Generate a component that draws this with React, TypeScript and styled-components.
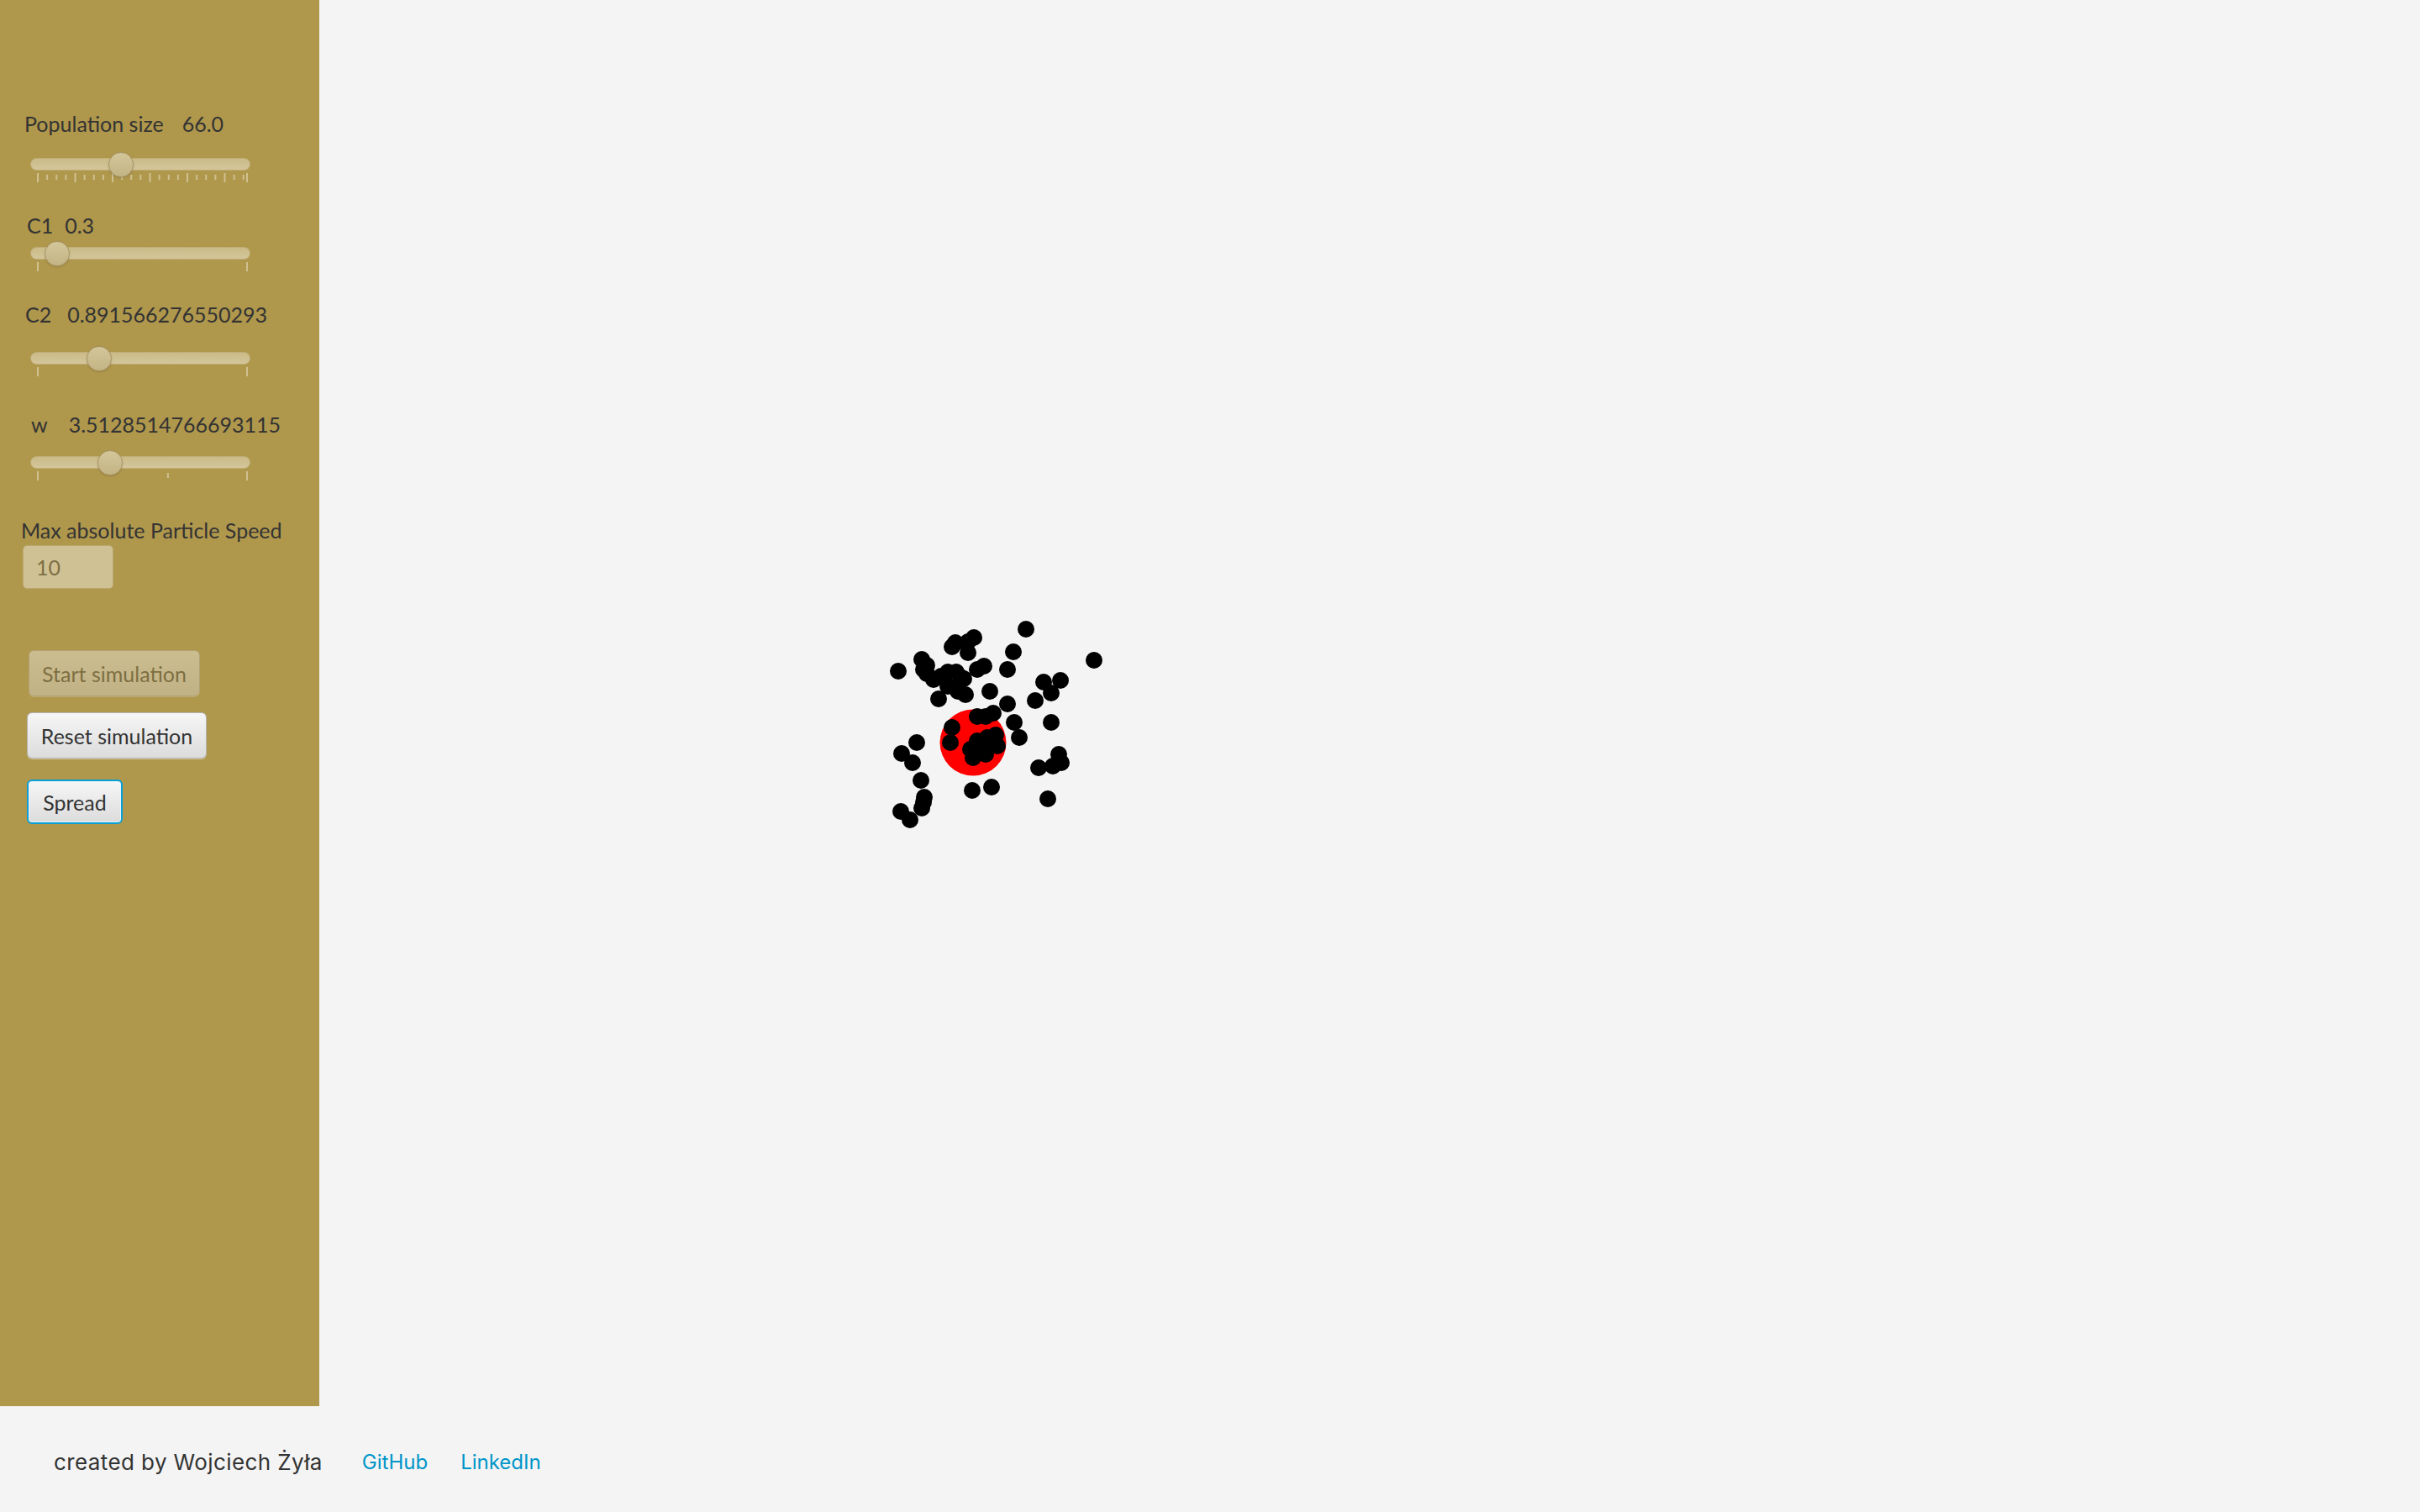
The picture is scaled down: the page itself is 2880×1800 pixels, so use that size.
import React from "react";
import styled, { createGlobalStyle } from "styled-components";

const GOLD = "#af974c";
const PAGE_BG = "#f4f4f4";
const TEXT = "#333333";
const LINK = "#0096c9";

const Global = createGlobalStyle`
  html, body { margin: 0; padding: 0; background: ${PAGE_BG}; }
  body { font-family: Lato, "Open Sans", sans-serif; color: ${TEXT}; }
  * { box-sizing: border-box; }
`;

const Page = styled.div`
  width: 2880px;
  height: 1800px;
  display: flex;
  flex-direction: column;
  background: ${PAGE_BG};
  overflow: hidden;
`;

const Main = styled.div`
  display: flex;
  height: 1674px;
  flex: none;
`;

const Sidebar = styled.aside`
  width: 380px;
  flex: none;
  background: ${GOLD};
  display: flex;
  flex-direction: column;
  align-items: flex-start;
  padding-top: 132px;
`;

const Canvas = styled.div`
  flex: 1;
  position: relative;
  background: ${PAGE_BG};
`;

const Field = styled.svg`
  display: block;
  width: 100%;
  height: 100%;
`;

const LabelRow = styled.div<{ $left: number; $top: number }>`
  display: flex;
  height: 30px;
  line-height: 30px;
  font-family: Lato, sans-serif;
  font-size: 25px;
  color: ${TEXT};
  white-space: nowrap;
  margin-top: ${(p) => p.$top}px;
  padding-left: ${(p) => p.$left}px;
`;

const Value = styled.span<{ $gap: number }>`
  margin-left: ${(p) => p.$gap}px;
`;

const SliderBox = styled.div<{ $top: number }>`
  margin-top: ${(p) => p.$top}px;
  margin-left: 36px;
  width: 262px;
  display: flex;
  flex-direction: column;
  gap: 3px;
`;

const Track = styled.div`
  position: relative;
  height: 15px;
  border: 1px solid #c1ae78;
  border-radius: 8px;
  background: linear-gradient(#cbbb88, #d4c69b);
`;

const Thumb = styled.div`
  position: absolute;
  top: -8px;
  width: 30px;
  height: 30px;
  margin-left: -16px;
  border-radius: 50%;
  border: 1px solid #a89569;
  background: linear-gradient(#d3c699, #c4b485);
  box-shadow: 0 1px 2px rgba(80, 65, 20, 0.25);
`;

const Ticks = styled.svg`
  display: block;
  width: 262px;
  height: 11px;
`;

const SpeedInput = styled.input`
  margin: 3px 0 0 27px;
  width: 108px;
  height: 52px;
  border: 1.5px solid #bba870;
  border-radius: 5px;
  background: #cfc193;
  padding: 0 0 0 15px;
  font-family: Lato, sans-serif;
  font-size: 25px;
  color: #7d6f45;
  outline: none;
`;

type Variant = "disabled" | "normal" | "focused";

const Button = styled.button<{ $variant: Variant; $top: number; $left: number; $width: number; $height: number }>`
  margin-top: ${(p) => p.$top}px;
  margin-left: ${(p) => p.$left}px;
  width: ${(p) => p.$width}px;
  height: ${(p) => p.$height}px;
  padding: 0;
  font-family: Lato, sans-serif;
  font-size: 25px;
  color: ${TEXT};
  border-radius: 6px;
  background: linear-gradient(#f6f6f6, #dcdcdc);
  border: ${(p) => (p.$variant === "focused" ? "2px solid #0aa0d6" : "1px solid #b3b3b3")};
  box-shadow: ${(p) =>
    p.$variant === "focused"
      ? "inset 0 0 0 1px #e6f3f8"
      : "0 1px 0 rgba(255, 255, 255, 0.45)"};
  opacity: ${(p) => (p.$variant === "disabled" ? 0.4 : 1)};
  cursor: default;
`;

const Footer = styled.footer`
  height: 126px;
  flex: none;
  display: flex;
  align-items: center;
  padding: 6px 0 0 64px;
  font-family: Inter, sans-serif;
  background: ${PAGE_BG};
`;

const Credit = styled.span`
  font-size: 26px;
  letter-spacing: 0.4px;
  color: ${TEXT};
`;

const FooterLink = styled.a<{ $gap: number }>`
  margin-left: ${(p) => p.$gap}px;
  font-size: 24px;
  color: ${LINK};
  text-decoration: none;
`;

type Tick = { f: number; major: boolean };

const TRACK_START = 9;
const TRACK_SPAN = 249;

function Slider({ top, value, ticks }: { top: number; value: number; ticks: Tick[] }) {
  return (
    <SliderBox $top={top}>
      <Track>
        <Thumb style={{ left: TRACK_START + value * TRACK_SPAN }} />
      </Track>
      <Ticks viewBox="0 0 262 11">
        {ticks.map((t, i) => {
          const x = TRACK_START + t.f * TRACK_SPAN;
          return (
            <line
              key={i}
              x1={x}
              x2={x}
              y1={t.major ? 0 : 2}
              y2={t.major ? 11 : 8}
              stroke="#d0c190"
              strokeWidth={2}
            />
          );
        })}
      </Ticks>
    </SliderBox>
  );
}

const ends: Tick[] = [
  { f: 0, major: true },
  { f: 1, major: true },
];

const popTicks: Tick[] = (() => {
  const unit = 44.5 / 249;
  const list: Tick[] = [];
  for (let k = 0; k < 6; k++) {
    for (let j = 0; j < 4; j++) {
      const f = (k + j / 4) * unit;
      if (f < 0.99) list.push({ f, major: j === 0 });
    }
  }
  list.push({ f: 1, major: true });
  return list;
})();

const wTicks: Tick[] = [...ends, { f: 0.622, major: false }];

const particles: [number, number][] = [
  [1069, 799], [1097, 785], [1103, 792], [1103, 802], [1111, 809], [1128, 800],
  [1138, 800], [1147, 808], [1128, 817], [1140, 823], [1149, 827], [1117, 832],
  [1137, 765], [1133, 770], [1159, 759], [1152, 764], [1152, 777], [1163, 797],
  [1171, 793], [1178, 823], [1163, 853], [1173, 853], [1182, 849], [1221, 749],
  [1206, 776], [1199, 797], [1302, 786], [1242, 812], [1262, 810], [1251, 825],
  [1232, 834], [1199, 838], [1207, 860], [1213, 878], [1251, 860], [1260, 898],
  [1263, 908], [1253, 912], [1236, 914], [1247, 951], [1133, 866], [1131, 884],
  [1091, 884], [1073, 897], [1086, 908], [1096, 929], [1100, 949], [1097, 962],
  [1072, 966], [1083, 976], [1157, 941], [1180, 937], [1155, 892], [1158, 902],
  [1168, 888], [1175, 878], [1185, 875], [1187, 888], [1173, 898], [1163, 882],
  [1099, 955], [1120, 805], [1143, 806], [1165, 895], [1180, 884], [1099, 797],
];

export default function App() {
  return (
    <Page>
      <Global />
      <Main>
        <Sidebar>
          <LabelRow $left={29} $top={0}>
            Population size<Value $gap={22}>66.0</Value>
          </LabelRow>
          <Slider top={26} value={0.3976} ticks={popTicks} />

          <LabelRow $left={32} $top={36}>
            C1<Value $gap={14}>0.3</Value>
          </LabelRow>
          <Slider top={11} value={0.0924} ticks={ends} />

          <LabelRow $left={30} $top={36}>
            C2<Value $gap={19}>0.891566276550293</Value>
          </LabelRow>
          <Slider top={30} value={0.293} ticks={ends} />

          <LabelRow $left={37} $top={42}>
            w<Value $gap={25}>3.5128514766693115</Value>
          </LabelRow>
          <Slider top={23} value={0.345} ticks={wTicks} />

          <LabelRow $left={25} $top={44}>
            Max absolute Particle Speed
          </LabelRow>
          <SpeedInput readOnly value="10" />

          <Button $variant="disabled" $top={73} $left={34} $width={204} $height={55}>
            Start simulation
          </Button>
          <Button $variant="normal" $top={19} $left={32} $width={214} $height={55}>
            Reset simulation
          </Button>
          <Button $variant="focused" $top={25} $left={32} $width={114} $height={53}>
            Spread
          </Button>
        </Sidebar>
        <Canvas>
          <Field viewBox="0 0 2500 1674" preserveAspectRatio="xMinYMin meet">
            <g transform="translate(-380 0)">
              <circle cx={1158} cy={884} r={39.5} fill="#ff0000" />
              {particles.map(([x, y], i) => (
                <circle key={i} cx={x} cy={y} r={10} fill="#000" />
              ))}
            </g>
          </Field>
        </Canvas>
      </Main>
      <Footer>
        <Credit>created by Wojciech Żyła</Credit>
        <FooterLink $gap={47} href="#">GitHub</FooterLink>
        <FooterLink $gap={39} href="#">LinkedIn</FooterLink>
      </Footer>
    </Page>
  );
}
